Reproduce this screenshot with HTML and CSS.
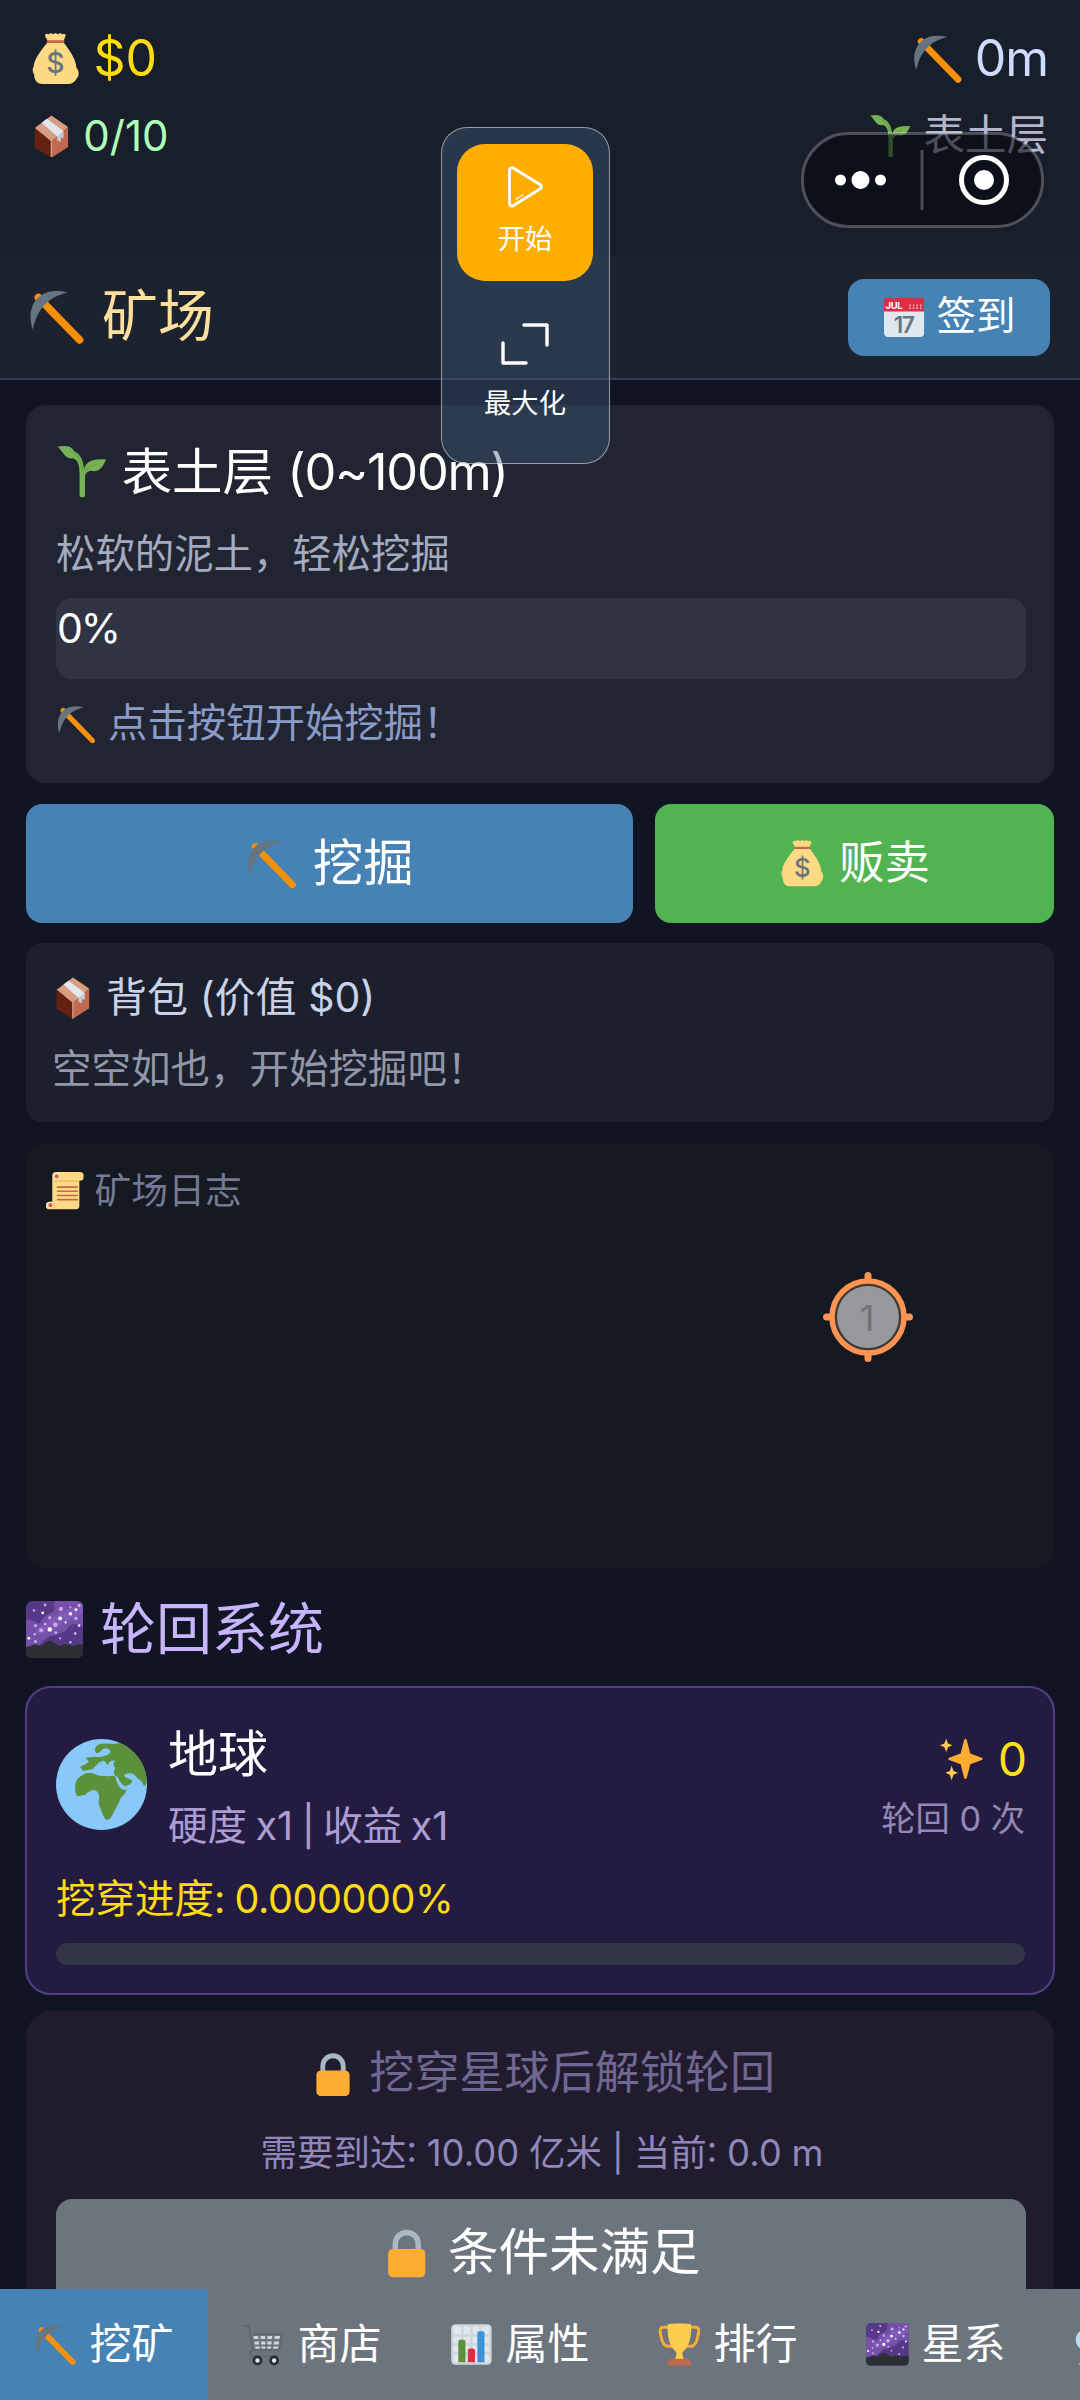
FILE: index.html
```html
<!DOCTYPE html>
<html lang="zh-CN">
<head>
<meta charset="utf-8">
<title>矿场</title>
<link rel="stylesheet" href="styles.css">
</head>
<body>
<svg class="sprite" width="0" height="0" aria-hidden="true">
  <symbol id="bag" viewBox="0 0 36 36">
    <path fill="#ffd983" d="M12 7C8 12 3 18 2.6 23.500C1.400 25.500 1.800 27.500 3 29.500C2.800 33 5 36 8.500 36H27.500C30 36 32.300 33.800 33 32C35 30 34.600 26.500 32.800 24.500C32.500 18 27 11 24 7Z"/>
    <path fill="#ffd983" d="M12.800 6 10.800 2.500C10 .5 12 0 13 1C14 0 15.500 0 16.200 1C17.200 0 18.800 0 19.800 1C20.600 0 22 0 22.800 1C24.200 0 25.500 .7 25 2.500L23.400 6Z"/>
    <rect x="11.800" y="5.200" width="12.600" height="1.800" rx=".9" fill="#c1694f"/>
  </symbol>
  <symbol id="box" viewBox="0 0 36 36">
    <path fill="#d99e82" d="M18 .5 32 10 18 22.500 4 11Z"/>
    <path fill="#662113" d="M4 11 18 22.500V36L4 27.500Z"/>
    <path fill="#c1694f" d="M18 22.500 32 10V27L18 36Z"/>
    <path fill="#d99e82" d="M17.400 22H18.600V36H17.400Z"/>
    <path fill="#e1e8ed" d="M9.800 6.500 14.200 3.200 28 13.500V19.500L26.500 18.300 25.200 22.500 23 21V18Z"/>
    <path fill="#bdc9d2" d="M23 18 28 13.500V19.500L26.500 18.300 25.200 22.500 23 21Z"/>
  </symbol>
  <symbol id="pick" viewBox="0 0 36 36">
    <path d="M6.500 6 32.500 32.700" stroke="#f4900c" stroke-width="4.800" stroke-linecap="round"/>
    <path fill="#66757f" d="M3 26.200C-1.500 14 4.500-2 25 2.800C15 5.200 6.500 10.500 3 26.200Z"/>
  </symbol>
  <symbol id="sprout" viewBox="0 0 36 36">
    <path fill="#77b255" d="M1 .6C6-.4 10.500-.3 12.600 3.600C16.500 5 19 9 19.700 16.500C20.300 12 24 8.500 35 9.500C33.500 13 31 19 24.500 17.300C22.500 17.500 20.300 19 20.300 21.500V35C20.300 36.300 16.500 36.300 16.500 35V20C16.500 13 15 9 11.500 8.600C6 9.500 5 3.500 1 .6Z"/>
    <path d="M9 3.200C14 4.500 18 9.500 18.400 18M28 13C23 14.500 19.500 17 18.800 21" fill="none" stroke="#6aa548" stroke-width="1"/>
  </symbol>
  <symbol id="calendar" viewBox="0 0 36 36">
    <path fill="#e1e8ed" d="M0 11H36V32A4 4 0 0 1 32 36H4A4 4 0 0 1 0 32Z"/>
    <path fill="#dd2e44" d="M0 4A3.500 3.500 0 0 1 3.500 .5H7A2.200 2.200 0 0 0 11 .5H25.500A2.200 2.200 0 0 0 29.500 .5H32.500A3.500 3.500 0 0 1 36 4V13H0Z"/>
    <path d="M22.500 7.500H34M22.500 10H34" stroke="#f4abba" stroke-width="1.500" stroke-dasharray="1.500 1.700"/>
  </symbol>
  <symbol id="scroll" viewBox="0 0 36 36">
    <path fill="#ffd983" d="M6 3.500A3.500 3.500 0 0 1 9.500 0H32.500A3.500 3.500 0 0 1 32.500 8.500H32V32A4 4 0 0 1 28.500 36H3.500A3.500 3.500 0 0 1 3.500 28.500H6Z"/>
    <path d="M8 8.700H31.500M7.500 29V35" stroke="#e9b85e" stroke-width="1.200"/>
    <path d="M11 14.500H30M11 18.500H30M11 22.500H30M11 26.500H30" stroke="#c1694f" stroke-width="1.500" stroke-linecap="round"/>
    <circle cx="10.300" cy="4.200" r="3.200" fill="#ffe8b6"/><circle cx="10.300" cy="4.200" r="2" fill="#c1694f"/>
    <circle cx="4.300" cy="31.800" r="3.200" fill="#ffe8b6"/><circle cx="4.300" cy="31.800" r="2" fill="#c1694f"/>
  </symbol>
  <symbol id="galaxy" viewBox="0 0 36 36">
    <rect width="36" height="36" rx="4" fill="#553986"/>
    <path fill="#7450a8" d="M18 0H32A4 4 0 0 1 36 4V16C31 13 27 15 25 19C21 20 19 22 15 22C12 24 9 27 7 29H0V12C3 11 6 14 9 14C11 9 14 9 17 7C19 4 17 2 18 0Z"/>
    <path fill="#9266cc" opacity=".45" d="M36 2C28 5 21 6 17 11C12 14 8 16 6 20C8 22 14 21 17 17C23 16 25 11 36 8Z"/>
    <path fill="#292f33" d="M0 29C4 29 5 26 8 28C11 29 12 25 15 25C18 25 19 29 22 28C26 26 28 29 31 28C33 27 35 27 36 28V32A4 4 0 0 1 32 36H4A4 4 0 0 1 0 32Z"/>
    <g fill="#fff"><circle cx="10.500" cy="7.500" r=".9"/><circle cx="21.500" cy="11" r="1.200"/><circle cx="15" cy="18" r="1.400"/><circle cx="28" cy="8" r="1.100"/><circle cx="31.500" cy="5.500" r=".9"/><circle cx="25" cy="13.500" r=".7"/><circle cx="1.800" cy="23.500" r=".9"/><circle cx="12" cy="14.500" r=".6"/><circle cx="33.500" cy="15.500" r=".8"/></g>
    <g fill="#c9a8f0"><circle cx="5" cy="6" r=".8"/><circle cx="12" cy="2.500" r=".9"/><circle cx="22" cy="5" r="1.300"/><circle cx="18.500" cy="15" r="1.500"/><circle cx="9.500" cy="18.500" r="1.300"/><circle cx="6" cy="15.500" r="1"/><circle cx="33.500" cy="2.800" r="1"/><circle cx="31.500" cy="11" r="1.100"/><circle cx="31" cy="20.500" r=".9"/><circle cx="28" cy="26" r=".8"/><circle cx="21.500" cy="23.500" r=".7"/><circle cx="18.800" cy="20" r=".9"/><circle cx="5.500" cy="21" r=".8"/><circle cx="6" cy="25.500" r=".9"/><circle cx="28" cy="4" r=".7"/><circle cx="15" cy="10.500" r="1"/></g>
  </symbol>
  <symbol id="earth" viewBox="0 0 36 36">
    <circle cx="18" cy="18" r="18" fill="#88c9f9"/>
    <path fill="#5c913b" d="M16 5.600C14.800 4.500 15.500 2.500 17.400 2C20 1.300 23 2.300 25.500 1.600C31 4.300 35.500 9.500 35.900 16C35.900 17.500 35.500 18.500 34.800 18.600C34.300 17 33.300 16 32.300 15.600C31 13.300 28.500 13 27 14.200C26.800 15.300 29 15.500 30.200 16.500C29.800 17.800 28.500 18.300 27.200 18.700C25.500 17.500 24.600 16 24 14.800C22.500 14 22.700 12.500 23.500 11.500C22.600 10.800 22.500 9.500 23.500 8.600C21.500 8 20.800 9.500 20.600 10.300C19.500 9.500 19.500 8.300 18.300 8.700C17 9 15.800 10.500 14.500 12C13 12 11.500 12.800 10.600 12.500L9.500 11C10.500 10.500 12 10 13 9L11.700 7.400C14 7 16.500 7.300 18.700 6.800C20.500 6.500 21.800 5.500 21.500 4.700C20.500 3.500 19.500 3.600 18.700 3.900C17.800 4.500 17.500 5.700 16 5.600Z"/>
    <path fill="#5c913b" d="M7.600 18.200C7.500 16.500 9.500 14.500 10.600 14.200C12 13.300 14 13 15 13.700C17 14.800 19.500 14.500 21 14.700C22.500 14.500 23.500 14.400 23.700 15.500C24.200 17.500 25.300 19.500 26.300 20L28 20.200C27.600 21.500 26.300 22.500 25.500 23.500C25 25.500 23.800 27 22.800 29C22.200 30.500 21.500 32 20 32C19 31.500 18.500 30 18 28.500C17.500 27 17 26.300 16.800 25C17.300 23.500 17 22 16.700 21.500C16 20.500 15.500 20.100 14.700 20.200C13 20.800 12.300 21 11.700 22.200C10.500 22.400 8.700 22.800 8.100 22.300C7.500 21 7.600 19.500 7.600 18.200Z"/>
    <path d="M23.900 15C25 17.500 25.500 19.300 27.300 19.300" fill="none" stroke="#88c9f9" stroke-width=".9"/>
  </symbol>
  <symbol id="sparkles" viewBox="0 0 36 36">
    <path fill="#ffac33" d="M20.300 1.300C20.900 1.300 21.200 1.900 21.400 2.600L24 12.700L32.800 16C33.900 16.500 33.900 17.100 32.800 17.600L24 20.900L21.400 31.100C21 32.600 19.600 32.600 19.200 31.100L16.600 20.900L7.800 17.600C6.700 17.100 6.700 16.500 7.800 16L16.600 12.700L19.200 2.600C19.400 1.900 19.700 1.300 20.300 1.300Z"/>
    <path fill="#ffcc4d" d="M5.500 1.400 6.900 5 10.200 6.400 6.900 7.800 5.500 11.500 4.100 7.800 .8 6.400 4.100 5ZM9.700 22 11.100 26.100 14.500 27.500 11.100 29 9.700 33.200 8.300 29 4.900 27.500 8.300 26.100Z"/>
  </symbol>
  <symbol id="lock" viewBox="0 0 36 36">
    <path d="M10 20V12.500A8 8 0 0 1 26 12.500V20" fill="none" stroke="#aab8c2" stroke-width="3.800"/>
    <rect x="5" y="16" width="26" height="20" rx="3.500" fill="#ffac33"/>
  </symbol>
  <symbol id="cart" viewBox="0 0 36 36">
    <path d="M1 2.500H5.500C7 9 8 16 9.500 22.500H31M9 9.500H33.500L31.500 22.500M9.500 22.500C6.500 24 6 28 9 28H30" fill="none" stroke="#59656e" stroke-width="1.100" stroke-linejoin="round"/>
    <path fill="#ccd6dd" d="M9.500 11H13.500L13.900 13.500H10ZM15.500 11H19.500V13.500H15.800ZM21.500 11H25.500L25.200 13.500H21.300ZM27.500 11H32L31.500 13.500H27.200ZM10.300 15.500H14.200L14.500 18H10.700ZM16 15.500H19.700V18H16.200ZM21.300 15.500H25L24.700 18H21.200ZM26.900 15.500H31.200L30.800 18H26.600ZM11 19.700H14.800L15 21.700H11.400ZM16.400 19.700H19.700V21.700H16.600ZM21.200 19.700H24.500L24.300 21.700H21.100ZM26.400 19.700H30.600L30.300 21.700H26.200Z"/>
    <circle cx="13" cy="31.500" r="3" fill="#e1e8ed" stroke="#292f33" stroke-width="2.300"/>
    <circle cx="27" cy="31.500" r="3" fill="#e1e8ed" stroke="#292f33" stroke-width="2.300"/>
  </symbol>
  <symbol id="chart" viewBox="0 0 36 36">
    <rect x="1" y="1" width="34" height="34" rx="3.500" fill="#ccd6dd"/>
    <path d="M3 3H9.500V9.500H3ZM11.500 3H17V9.500H11.500ZM19 3H24.500V9.500H19ZM26.500 3H33V9.500H26.500ZM3 11.500H9.500V17H3ZM11.500 11.500H17V17H11.500ZM19 11.500H24.500V17H19ZM26.500 11.500H33V17H26.500ZM3 19H9.500V24.500H3ZM11.500 19H17V24.500H11.500ZM19 19H24.500V24.500H19ZM26.500 19H33V24.500H26.500ZM3 26.500H9.500V33H3ZM11.500 26.500H17V33H11.500ZM19 26.500H24.500V33H19ZM26.500 26.500H33V33H26.500Z" fill="#e1e8ed"/>
    <path fill="#5c913b" d="M7 33V15.500Q7 14 8.500 14H11.500Q13 14 13 15.500V33Z"/>
    <path fill="#dd2e44" d="M15 33V23Q15 21.500 16.500 21.500H19.500Q21 21.500 21 23V33Z"/>
    <path fill="#3b94d9" d="M23 33V8.500Q23 7 24.500 7H27.500Q29 7 29 8.500V33Z"/>
  </symbol>
  <symbol id="trophy" viewBox="0 0 36 36">
    <path d="M9 3.500H4.500C1 3.500 1.500 7 2.500 11C3.500 16.500 5 19.500 8 19.500H12M27 3.500H31.500C35 3.500 34.500 7 33.500 11C32.500 16.500 31 19.500 28 19.500H24" fill="none" stroke="#ffac33" stroke-width="2.500"/>
    <path fill="#ffcc4d" d="M8 1.500C8 0 28 0 28 1.500C28 14 26 20 20.500 24.500C20.500 27.500 21 29 22 30.500H14C15 29 15.500 27.500 15.500 24.500C10 20 8 14 8 1.500Z"/>
    <path fill="#c1694f" d="M10.500 30H25.500C26.500 31.500 28.500 33 28.500 36H7.500C7.500 33 9.500 31.500 10.500 30Z"/>
  </symbol>
  <symbol id="orb" viewBox="0 0 36 36">
    <circle cx="10.500" cy="14" r="9" fill="#bbddf5"/>
    <path d="M4 34.500 7 33" stroke="#9fb0ba" stroke-width="1.500"/>
  </symbol>
</svg>

<div class="app">
  <header class="stats">
    <div class="stats-row big">
      <span class="label gold"><svg class="icon" viewBox="0 0 36 36"><use href="#bag"/><text x="18" y="28.500" text-anchor="middle" class="bag-sign">$</text></svg>$0</span>
      <span class="label depth"><svg class="icon"><use href="#pick"/></svg>0m</span>
    </div>
    <div class="stats-row small">
      <span class="label mint"><svg class="icon"><use href="#box"/></svg>0/10</span>
      <span class="label layer"><svg class="icon"><use href="#sprout"/></svg>表土层</span>
    </div>
  </header>

  <div class="titlebar">
    <h1 class="label page-title"><svg class="icon"><use href="#pick"/></svg>矿场</h1>
    <button class="label checkin"><svg class="icon" viewBox="0 0 36 36"><use href="#calendar"/><text x="1.300" y="11" class="cal-month">JUL</text><text x="17.700" y="32" text-anchor="middle" class="cal-day">17</text></svg>签到</button>
  </div>

  <main class="content">
    <section class="card layer-card">
      <h2 class="label layer-name"><svg class="icon"><use href="#sprout"/></svg><span>表土层 <span class="range">(0~100m)</span></span></h2>
      <p class="layer-desc">松软的泥土，轻松挖掘</p>
      <div class="layer-progress">0%</div>
      <p class="label layer-hint"><svg class="icon"><use href="#pick"/></svg>点击按钮开始挖掘！</p>
    </section>

    <div class="actions">
      <button class="label action dig"><svg class="icon"><use href="#pick"/></svg>挖掘</button>
      <button class="label action sell"><svg class="icon" viewBox="0 0 36 36"><use href="#bag"/><text x="18" y="28.500" text-anchor="middle" class="bag-sign">$</text></svg>贩卖</button>
    </div>

    <section class="card bag-card">
      <h2 class="label bag-title"><svg class="icon"><use href="#box"/></svg>背包 (价值 $0)</h2>
      <p class="bag-empty">空空如也，开始挖掘吧！</p>
    </section>

    <section class="card log-card">
      <h2 class="label log-title"><svg class="icon"><use href="#scroll"/></svg>矿场日志</h2>
    </section>

    <h2 class="label section-title"><svg class="icon"><use href="#galaxy"/></svg>轮回系统</h2>

    <section class="card planet-card">
      <div class="planet-head">
        <svg class="planet"><use href="#earth"/></svg>
        <div class="planet-info">
          <h3 class="planet-name">地球</h3>
          <p class="planet-meta">硬度 x1 | 收益 x1</p>
        </div>
        <div class="planet-score">
          <span class="label stars"><svg class="icon"><use href="#sparkles"/></svg>0</span>
          <span class="cycles">轮回 0 次</span>
        </div>
      </div>
      <p class="pierce">挖穿进度: <span class="percent">0.000000%</span></p>
      <div class="pierce-bar"></div>
    </section>

    <section class="card locked-card">
      <h3 class="label locked-title"><svg class="icon"><use href="#lock"/></svg>挖穿星球后解锁轮回</h3>
      <p class="locked-need">需要到达: 10.00 亿米 | 当前: 0.0 m</p>
      <button class="label locked-button"><svg class="icon"><use href="#lock"/></svg>条件未满足</button>
    </section>
  </main>

  <nav class="tabs">
    <a class="label tab active"><svg class="icon"><use href="#pick"/></svg>挖矿</a>
    <a class="label tab"><svg class="icon"><use href="#cart"/></svg>商店</a>
    <a class="label tab"><svg class="icon"><use href="#chart"/></svg>属性</a>
    <a class="label tab"><svg class="icon"><use href="#trophy"/></svg>排行</a>
    <a class="label tab"><svg class="icon"><use href="#galaxy"/></svg>星系</a>
    <a class="label tab"><svg class="icon"><use href="#orb"/></svg></a>
  </nav>

  <svg class="capsule" viewBox="0 0 243 96">
    <rect x="1.500" y="1.500" width="240" height="93" rx="46.500" fill="#05070c" fill-opacity=".6" stroke="#fff" stroke-opacity=".25" stroke-width="3"/>
    <path d="M121 18V78" stroke="#4a4c52" stroke-width="3"/>
    <g fill="#fff"><circle cx="39.500" cy="48" r="5.500"/><circle cx="59.500" cy="48" r="9"/><circle cx="79.500" cy="48" r="5.500"/><circle cx="183" cy="48" r="10"/></g>
    <circle cx="183" cy="48" r="22.500" fill="none" stroke="#fff" stroke-width="5"/>
  </svg>

  <div class="float-panel">
    <button class="float-item start">
      <svg class="float-icon" viewBox="0 0 42 42"><path d="M5.500 4.500C5.500 2 7.500 1 9.500 2.200L36 18.500C38 19.800 38 21.800 36 23L9.500 39.500C7.500 40.700 5.500 39.500 5.500 37.500Z" fill="none" stroke="#fff" stroke-width="2.800"/><path d="M11.500 33.500 19.500 28.500" stroke="#fff" stroke-width="1.200"/></svg>
      开始
    </button>
    <button class="float-item">
      <svg class="float-icon max" viewBox="0 0 50 42"><path d="M24 2H47V22M3 20V40H26" fill="none" stroke="#fff" stroke-width="3.400" stroke-linecap="round" stroke-linejoin="round"/></svg>
      最大化
    </button>
  </div>

  <svg class="tap-target" viewBox="0 0 90 90">
    <path d="M45 3.500V86.500M3.500 45H86.500" stroke="#ff9452" stroke-width="7" stroke-linecap="round"/>
    <circle cx="45" cy="45" r="36" fill="#3f3935" stroke="#ff9452" stroke-width="5.500"/>
    <circle cx="45" cy="45" r="31" fill="#98999c"/>
    <text x="44" y="59" text-anchor="middle" class="tap-number">1</text>
  </svg>
</div>
</body>
</html>
```
FILE: styles.css
```css
* { box-sizing: border-box; }

body {
  margin: 0;
  background: #111422;
  color: #fff;
  font-family: Inter, "Noto Sans CJK SC", sans-serif;
  font-weight: 400;
}

h1, h2, h3, p { margin: 0; font-weight: 400; }

button {
  border: 0;
  padding: 0;
  color: #fff;
  font-family: inherit;
  font-weight: 400;
}

.sprite { position: absolute; }

.app {
  position: relative;
  display: flex;
  flex-direction: column;
  width: 1080px;
  height: 2400px;
  overflow: hidden;
}

.label {
  display: flex;
  align-items: center;
  gap: .3em;
  line-height: 1.2;
  white-space: pre;
}

.icon { width: 1.02em; height: 1.02em; flex: none; }

.bag-sign { font: 500 20px Inter, sans-serif; fill: #67757f; }
.cal-month { font: 700 8.500px Inter, sans-serif; fill: #fff; letter-spacing: -.3px; }
.cal-day { font: 600 20px Inter, sans-serif; fill: #66757f; letter-spacing: -1px; }

/* Player stats */
.stats {
  height: 256px;
  flex: none;
  padding: 28px 32px 0 30px;
  background: #191e2b;
}

.stats-row { display: flex; justify-content: space-between; height: 60px; }
.stats-row.big { font-size: 50px; margin-bottom: 18px; }
.stats-row.small { font-size: 42px; }
.gold { gap: .25em; color: #ffdb0f; }
.depth { gap: .24em; letter-spacing: -1px; color: #cddcff; }
.mint { gap: .25em; color: #b0ffb8; }
.layer { font-size: 41.500px; color: #b4b6ce; }

/* Title bar */
.titlebar {
  display: flex;
  justify-content: space-between;
  align-items: center;
  height: 124px;
  flex: none;
  padding: 0 30px 0 28px;
  background: #1d222f;
  border-bottom: 2px solid #343a50;
}

.page-title { font-size: 56px; color: #fddf9e; }

.checkin {
  justify-content: center;
  width: 202px;
  height: 77px;
  padding-left: 2px;
  border-radius: 16px;
  background: #4682b4;
  font-size: 39.500px;
}

/* Content */
.content {
  display: flex;
  flex-direction: column;
  flex: 1;
  min-height: 0;
  overflow: hidden;
  padding: 25px 26px 0;
}

.card { flex: none; border-radius: 20px; }

.layer-card { height: 378px; padding: 36px 28px 0 30px; background: #212532; }
.layer-name { gap: .28em; height: 62px; font-size: 50.500px; }
.range { letter-spacing: -1.300px; }
.layer-desc { height: 50px; line-height: 50px; margin-top: 26px; font-size: 39.400px; color: #a4aabf; }

.layer-progress {
  height: 81px;
  margin-top: 19px;
  padding-left: 1px;
  border-radius: 16px;
  background: #303442;
  font-size: 41px;
  letter-spacing: -2px;
  line-height: 60px;
}

.layer-hint { height: 50px; margin-top: 20px; font-size: 39.400px; color: #8a9bc8; }

.actions { display: flex; gap: 22px; margin-top: 21px; flex: none; }
.action { justify-content: center; height: 119px; border-radius: 16px; }
.dig { width: 607px; padding-left: 1px; background: #4682b4; font-size: 50.500px; }
.sell { flex: 1; background: #51b450; font-size: 45.500px; }

.bag-card { height: 179px; margin-top: 20px; padding: 30px 27px 0 26px; background: #1b202c; border-radius: 16px; }
.bag-title { height: 50px; font-size: 41px; color: #cad2ea; }
.bag-empty { height: 50px; line-height: 50px; margin-top: 21px; font-size: 39.500px; color: #9297ab; }

.log-card { height: 424px; margin-top: 22px; padding: 22px 20px 0; background: #141922; border-radius: 16px; }
.log-title { height: 50px; font-size: 36.800px; color: #747a93; }

.section-title { height: 60px; margin-top: 32px; flex: none; font-size: 56px; color: #c8b5ff; }

.planet-card {
  height: 309px;
  margin: 26px -1px 0;
  padding: 36px 28px 0 29px;
  border: 2px solid #523f82;
  border-radius: 26px;
  background: #241c40;
}

.planet-head { display: flex; height: 120px; }
.planet { width: 91px; height: 91px; margin-top: 15px; flex: none; }
.planet-info { flex: 1; padding-left: 21px; }
.planet-name { height: 60px; line-height: 60px; font-size: 50px; }
.planet-meta { height: 50px; line-height: 50px; margin-top: 17px; font-size: 39.500px; word-spacing: -2.600px; color: #ab9dd4; }
.planet-score { display: flex; flex-direction: column; align-items: flex-end; }
.stars { gap: .26em; height: 50px; margin: 11px -2px 0 0; font-size: 46px; color: #ffe01b; }
.cycles { height: 40px; line-height: 40px; margin-top: 14px; font-size: 34.300px; color: #9388b8; }
.pierce { height: 50px; line-height: 50px; margin-top: 30px; font-size: 39.500px; word-spacing: -2px; color: #ffdb17; }
.percent { letter-spacing: -.400px; }
.pierce-bar { height: 22px; margin-top: 19px; border-radius: 11px; background: #323547; }

.locked-card {
  height: 420px;
  margin-top: 16px;
  padding: 38px 28px 0 30px;
  background: #201c2e;
  border-radius: 26px;
}

.locked-title { justify-content: center; height: 48px; padding-left: 3px; font-size: 45.100px; color: #706792; }
.locked-need { height: 50px; line-height: 50px; margin-top: 31px; padding-left: 2px; text-align: center; font-size: 36.500px; word-spacing: -.500px; color: #9187bc; }

.locked-button {
  justify-content: center;
  width: 100%;
  height: 106px;
  margin-top: 21px;
  border-radius: 16px;
  background: #6c757d;
  font-size: 50.500px;
}

/* Bottom tabs */
.tabs { display: flex; height: 111px; flex: none; overflow: hidden; background: #6c757d; }
.tab { width: 208px; flex: none; padding-left: 34px; font-size: 42px; }
.tab.active { background: #4682b4; }

/* Overlays */
.capsule { position: absolute; left: 801px; top: 132px; width: 243px; height: 96px; }

.float-panel {
  position: absolute;
  left: 441px;
  top: 127px;
  width: 169px;
  height: 337px;
  padding: 16px 0 0 15px;
  border: 1px solid rgba(255, 255, 255, .5);
  border-radius: 26px;
  background: rgba(66, 92, 122, .4);
}

.float-item {
  display: flex;
  flex-direction: column;
  align-items: center;
  width: 136px;
  height: 137px;
  padding-top: 22px;
  border-radius: 28px;
  background: transparent;
  font-size: 27.300px;
  line-height: 34px;
}

.float-item + .float-item { margin-top: 20px; }
.start { background: #ffae00; }
.float-icon { width: 42px; height: 42px; margin-bottom: 15px; }
.float-icon.max { width: 50px; margin-bottom: 22px; }

.tap-target { position: absolute; left: 823px; top: 1272px; width: 90px; height: 90px; }
.tap-number { font: 400 36px Inter, sans-serif; fill: #707178; }
```
